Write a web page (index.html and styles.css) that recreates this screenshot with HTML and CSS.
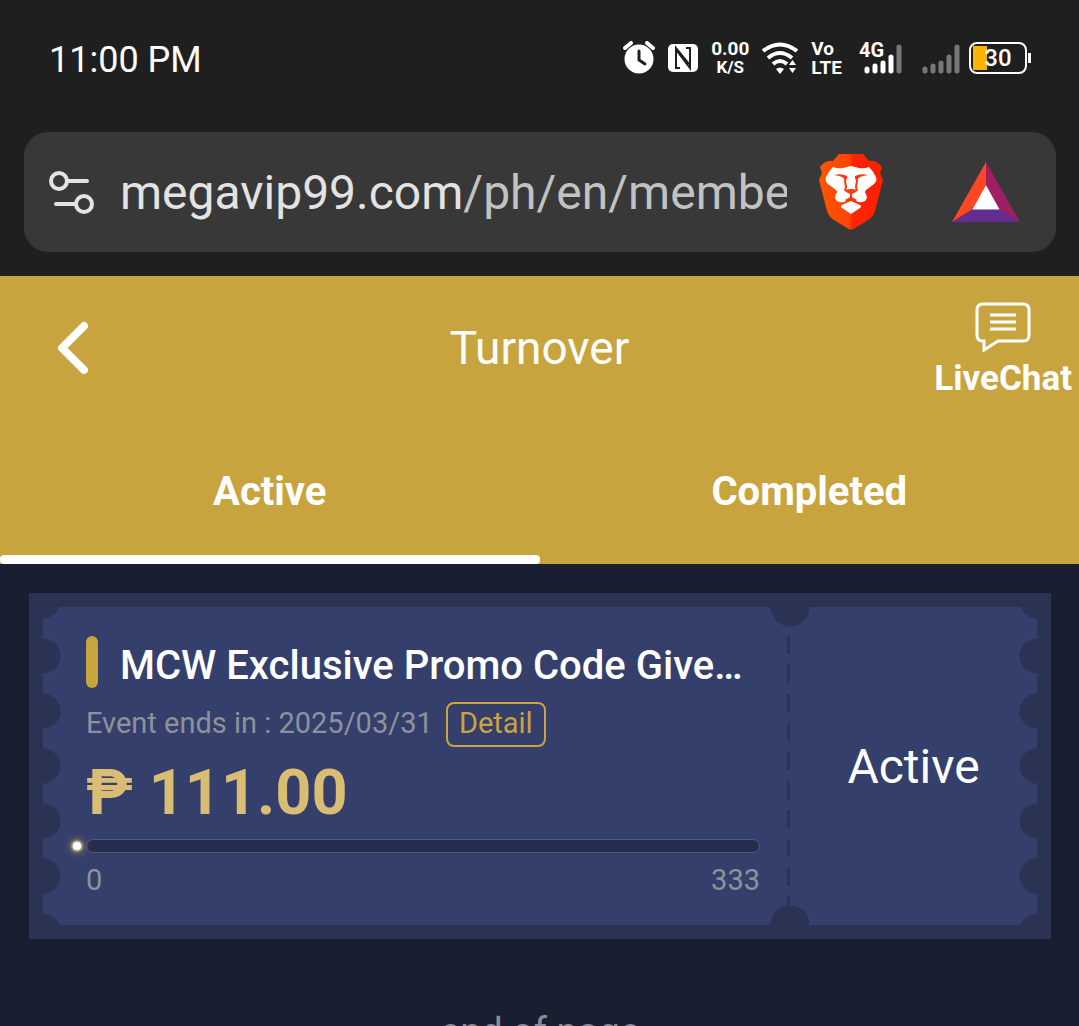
FILE: index.html
```html
<!DOCTYPE html>
<html lang="en">

<head>
    <meta charset="UTF-8">
    <meta name="viewport" content="width=device-width, initial-scale=1.0">
    <title>Turnover</title>
    <link rel="stylesheet" href="styles.css">
</head>

<body>
    <div class="browser">
        <div class="status">
            <span class="clock">11:00 PM</span>
            <div class="status-icons">
                <svg class="alarm" width="32" height="34" viewBox="0 0 32 34">
                    <circle cx="16" cy="18" r="14.5" fill="#fff"/>
                    <path d="M2 7l6-5M30 7l-6-5" stroke="#fff" stroke-width="4" stroke-linecap="round"/>
                    <path d="M16 10v9l6 4" fill="none" stroke="#1f1f1f" stroke-width="3" stroke-linecap="round"/>
                </svg>
                <svg class="nfc" width="30" height="28" viewBox="0 0 30 28">
                    <rect width="30" height="28" rx="5" fill="#fff"/>
                    <path d="M12 24H8V4l13 16M18 4h4v20L9 7" fill="none" stroke="#1f1f1f" stroke-width="2"/>
                    <path d="M8 4l5 5v4zM22 24l-5-5v-4z" fill="#1f1f1f"/>
                </svg>
                <span class="tiny speed"><span class="rate">0.00</span><span>K/S</span></span>
                <svg class="wifi" width="36" height="32" viewBox="0 0 36 32">
                    <g fill="none" stroke="#fff" stroke-width="4">
                        <path d="M1 9q17-13 34 0"/>
                        <path d="M6 16q12-10 24 0"/>
                        <path d="M11 22q7-6 14 0"/>
                    </g>
                    <path d="M14 27q4-3 8 0l-4 5zM27 23l3.500-5 3.500 5zM27 26h7l-3.500 5z" fill="#fff"/>
                </svg>
                <span class="tiny volte"><span>Vo</span><span>LTE</span></span>
                <span class="mobile">
                    <span class="net">4G</span>
                    <svg width="38" height="32" viewBox="0 0 38 32" stroke-width="5" stroke-linecap="round">
                        <path d="M3 27v2M11 24v5M19 21v8M27 15v14" stroke="#fff"/>
                        <path d="M35 5v24" stroke="#777"/>
                    </svg>
                </span>
                <svg class="signal" width="38" height="32" viewBox="0 0 38 32" stroke-width="5" stroke-linecap="round">
                    <path d="M3 27v2M11 24v5M19 21v8M27 15v14M35 5v24" stroke="#777"/>
                </svg>
                <span class="battery"><span class="level">30</span></span>
            </div>
        </div>
        <div class="address">
            <svg class="tune" width="46" height="44" viewBox="0 0 46 44" fill="none" stroke="#e3e3e3" stroke-width="4" stroke-linecap="round">
                <circle cx="10" cy="11" r="8"/>
                <path d="M19 11h19M7 34h19"/>
                <circle cx="35" cy="34" r="8"/>
            </svg>
            <span class="url">megavip99.com<span class="path">/ph/en/member</span></span>
            <svg class="brave" width="64" height="76" viewBox="0 0 64 76">
                <defs>
                    <linearGradient id="lion">
                        <stop offset="0" stop-color="#ff5500"/>
                        <stop offset=".48" stop-color="#ff4500"/>
                        <stop offset=".52" stop-color="#ff2500"/>
                        <stop offset="1" stop-color="#ff2000"/>
                    </linearGradient>
                </defs>
                <path d="M20 0h24l6 7c5-1 9 1 13 6l-2 6 3 7-8 31q-2 6-7 9L36 74q-4 3-8 0L15 66q-5-3-7-9L0 26l3-7-2-6c4-5 8-7 13-6z" fill="url(#lion)"/>
                <path d="M14 13q5 2 10 1l8-2 8 2q5 1 10-1 4 4 7 10c1 3 0 5-2 7l-8 6q-2 2 0 4c2 4 0 8-4 8q-3 1-6-1l-5-4-5 4q-3 2-6 1c-4 0-6-4-4-8q2-2 0-4l-8-6c-2-2-3-4-2-7q3-6 7-10z" fill="#fff"/>
                <path d="M15 21q7-2 13 1v2q-1 2-2 2-2-4-11-5zM49 21q-7-2-13 1v2q1 2 2 2 2-4 11-5z" fill="#fa3a0a"/>
                <path d="M27 23l-1 4 1 6-1 4M37 23l1 4-1 6 1 4" fill="none" stroke="#fa3a0a" stroke-width="2"/>
                <path d="M26 36q6-2 12 0 0 2-5 4v3l5 3-2 2-4-3-4 3-2-2 5-3v-3q-5-2-5-4z" fill="#fa3a0a"/>
                <path d="M32 47l9 4q2 1 0 3l-9 6-9-6q-2-2 0-3z" fill="#fff"/>
            </svg>
            <svg class="bat" width="68" height="62" viewBox="0 0 70 62">
                <path d="M35 0v26L21 49 0 62z" fill="#ff4724"/>
                <path d="M35 0v26l14 23 21 13z" fill="#9e1f63"/>
                <path d="M0 62l21-13h28l21 13z" fill="#662d91"/>
                <path d="M35 24L21 49h28z" fill="#fff"/>
            </svg>
        </div>
    </div>

    <header class="header">
        <div class="topbar">
            <button class="back" type="button" aria-label="Back">
                <svg width="32" height="54" viewBox="0 0 32 54" fill="none" stroke="#fff" stroke-width="8" stroke-linecap="round" stroke-linejoin="round">
                    <path d="M27 5L5 27l22 22"/>
                </svg>
            </button>
            <h1>Turnover</h1>
            <a class="livechat" href="#">
                <svg width="56" height="50" viewBox="0 0 56 50" fill="none" stroke="#fff" stroke-width="3">
                    <path d="M8 2h40q6 0 6 6v25q0 6-6 6H23L9 48v-9H8q-6 0-6-6V8q0-6 6-6z"/>
                    <path d="M15 13h26M15 20h26M15 27h26"/>
                </svg>
                LiveChat
            </a>
        </div>
        <nav class="tabs">
            <a class="tab selected" href="#">Active</a>
            <a class="tab" href="#">Completed</a>
        </nav>
    </header>

    <main>
        <div class="card">
            <div class="ticket">
                <div class="info">
                    <h2><span class="ellipsis">MCW Exclusive Promo Code Giveaway</span></h2>
                    <div class="event">
                        <span>Event ends in : 2025/03/31</span>
                        <button class="detail" type="button">Detail</button>
                    </div>
                    <div class="amount">₱ 111.00</div>
                    <div class="bar"><span class="spark"></span></div>
                    <div class="range">
                        <span>0</span>
                        <span>333</span>
                    </div>
                </div>
                <div class="stub">Active</div>
            </div>
        </div>
        <p class="end">end of page</p>
    </main>
</body>

</html>
```

FILE: styles.css
```css
* {
    box-sizing: border-box;
}

body {
    margin: 0;
    height: 100vh;
    overflow: hidden;
    background-color: #191e30;
    color: #fff;
    font-family: Roboto, "Liberation Sans", sans-serif;
}

h1, h2, p {
    margin: 0;
}

button {
    padding: 0;
    border: 0;
    background: none;
    font-family: inherit;
}

a {
    color: inherit;
    text-decoration: none;
}

svg {
    display: block;
    flex: none;
}

/* phone status bar and address bar */
.browser {
    padding: 36px 23px 24px 24px;
    background-color: #1f1f1f;
}

.status {
    display: flex;
    justify-content: space-between;
    align-items: center;
    height: 48px;
    padding: 0 24px 0 25px;
}

.clock {
    font-size: 36px;
}

.status-icons {
    display: flex;
    align-items: center;
    gap: 13px;
    padding-bottom: 4px;
}

.tiny {
    display: flex;
    flex-direction: column;
    align-items: center;
    font-size: 17px;
    line-height: 19px;
    font-weight: 700;
}

.rate {
    font-size: 19px;
}

.volte {
    align-items: flex-start;
    font-size: 19px;
}

.mobile {
    position: relative;
    margin-left: 9px;
}

.net {
    position: absolute;
    left: -5px;
    top: -2px;
    font-size: 20px;
    line-height: 20px;
    font-weight: 700;
}

.signal {
    margin-left: 7px;
}

.battery {
    position: relative;
    width: 58px;
    height: 32px;
    margin: 0 5px 0 -4px;
    border: 2px solid #fff;
    border-radius: 8px;
    background: linear-gradient(#fbb306, #fbb306) 2px 2px / 14px 24px no-repeat;
    text-align: center;
}

.battery::after {
    content: "";
    position: absolute;
    right: -6px;
    top: 9px;
    width: 3px;
    height: 10px;
    background-color: #fff;
}

.level {
    font-size: 24px;
    line-height: 28px;
    font-weight: 500;
}

.address {
    display: flex;
    align-items: center;
    height: 120px;
    margin-top: 48px;
    padding: 0 36px 0 25px;
    border-radius: 24px;
    background-color: #383838;
}

.url {
    flex: 1;
    min-width: 0;
    margin: 0 32px 0 25px;
    overflow: hidden;
    white-space: nowrap;
    color: #e3e3e3;
    font-size: 48px;
}

.path {
    color: #c2c2c2;
}

.bat {
    margin-left: 69px;
}

/* page header */
.header {
    background-color: #c8a43f;
}

.topbar {
    display: grid;
    grid-template-columns: 1fr auto 1fr;
    align-items: center;
    height: 144px;
}

.back {
    justify-self: start;
    margin-left: 57px;
}

h1 {
    font-size: 46px;
    font-weight: 400;
}

.livechat {
    display: flex;
    flex-direction: column;
    align-items: center;
    justify-self: end;
    gap: 5px;
    margin-right: 7px;
    padding-top: 6px;
    font-size: 35px;
    line-height: 44px;
    font-weight: 700;
}

.tabs {
    display: flex;
}

.tab {
    display: flex;
    flex: 1;
    flex-direction: column;
    height: 144px;
    text-align: center;
    font-size: 40px;
    line-height: 144px;
    font-weight: 700;
}

.selected::after {
    content: "";
    height: 9px;
    margin-top: -9px;
    border-radius: 4px;
    background-color: #fff;
}

/* ticket */
main {
    padding: 29px 28px 0 29px;
}

.card {
    padding: 14px;
    background-color: #2a3353;
}

.ticket {
    display: grid;
    grid-template-columns: 1fr 247px;
    min-height: 318px;
    background:
        radial-gradient(circle at 0 50%, #2a3353 17px, transparent 18px) left center / 20px 55px repeat-y,
        radial-gradient(circle at 100% 50%, #2a3353 17px, transparent 18px) right center / 20px 55px repeat-y,
        #353f6b;
}

.info {
    min-width: 0;
    padding: 29px 30px 0 43px;
}

h2 {
    display: flex;
    align-items: flex-start;
    gap: 22px;
    font-size: 40px;
    line-height: 60px;
    font-weight: 500;
}

h2::before {
    content: "";
    flex: none;
    width: 12px;
    height: 52px;
    border-radius: 6px;
    background-color: #c8a43f;
}

.ellipsis {
    overflow: hidden;
    text-overflow: ellipsis;
    white-space: nowrap;
}

.event {
    display: flex;
    gap: 13px;
    margin-top: 6px;
    color: #8c929c;
    font-size: 29px;
    line-height: 42px;
}

.detail {
    width: 100px;
    height: 45px;
    padding-bottom: 4px;
    border: 2px solid #c8a43f;
    border-radius: 8px;
    color: #c8a43f;
    font-size: 29px;
}

.amount {
    margin-top: 10px;
    color: #dabd75;
    font-size: 63px;
    line-height: 72px;
    font-weight: 700;
}

.bar {
    position: relative;
    height: 14px;
    margin-top: 10px;
    border: 1px solid #535a79;
    border-radius: 7px;
    background-color: #272d4c;
}

.spark {
    position: absolute;
    left: -14px;
    top: 2px;
    width: 8px;
    height: 8px;
    border-radius: 50%;
    background-color: #fff;
    box-shadow: 0 0 3px 1px #fff0b0, 0 0 8px 2px #a08c55;
}

.range {
    display: flex;
    justify-content: space-between;
    margin-top: 8px;
    color: #8c929c;
    font-size: 29px;
    line-height: 38px;
}

.stub {
    display: flex;
    align-items: center;
    justify-content: center;
    background:
        radial-gradient(circle at 0 0, #2a3353 19px, transparent 20px),
        radial-gradient(circle at 0 100%, #2a3353 19px, transparent 20px);
    font-size: 48px;
    position: relative;
}

/* other half of the notches and the tear line */
.stub::before {
    content: "";
    position: absolute;
    left: -20px;
    top: 0;
    bottom: 0;
    width: 20px;
    background:
        radial-gradient(circle at 100% 0, #2a3353 19px, transparent 20px),
        radial-gradient(circle at 100% 100%, #2a3353 19px, transparent 20px),
        repeating-linear-gradient(#2a3353 0 18px, transparent 18px 29px) right / 3px 100% no-repeat;
}

.end {
    margin-top: 71px;
    color: #898c97;
    text-align: center;
    font-size: 38px;
    line-height: 44px;
}
```
